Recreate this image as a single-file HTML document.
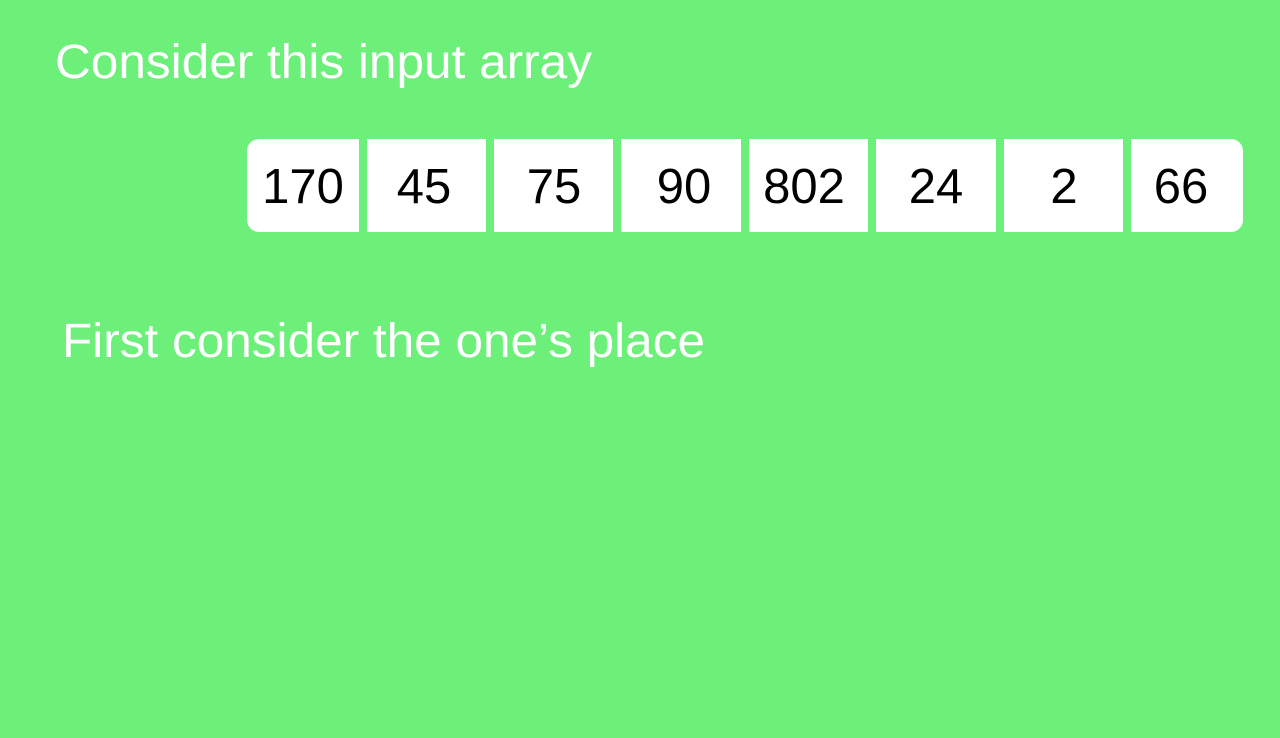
<!DOCTYPE html>
<html><head><meta charset="utf-8"><style>
html,body{margin:0;padding:0;}
body{width:1280px;height:738px;background:#6cf07a;overflow:hidden;position:relative;font-family:"Liberation Sans",sans-serif;}
.b{position:absolute;top:139px;height:93px;background:#fff;}
svg{position:absolute;left:0;top:0;}
</style></head><body>
<div class="b" style="left:247px;width:112px;border-radius:12px 0 0 12px"></div>
<div class="b" style="left:367px;width:119px"></div>
<div class="b" style="left:494px;width:119px"></div>
<div class="b" style="left:621px;width:120px"></div>
<div class="b" style="left:749px;width:119px"></div>
<div class="b" style="left:876px;width:120px"></div>
<div class="b" style="left:1004px;width:119px"></div>
<div class="b" style="left:1131px;width:112px;border-radius:0 12px 12px 0"></div>
<svg width="1280" height="738" font-family="Liberation Sans, sans-serif">
<text x="55" y="78" font-size="48" fill="#fff" textLength="537" lengthAdjust="spacingAndGlyphs">Consider this input array</text>
<text x="62" y="357" font-size="48" fill="#fff" textLength="643" lengthAdjust="spacingAndGlyphs">First consider the one’s place</text>
<g font-size="49" fill="#000" text-anchor="middle">
<text x="303" y="203">170</text>
<text x="424" y="203">45</text>
<text x="554" y="203">75</text>
<text x="684" y="203">90</text>
<text x="804" y="203">802</text>
<text x="936" y="203">24</text>
<text x="1064" y="203">2</text>
<text x="1181" y="203">66</text>
</g>
</svg>
</body></html>
